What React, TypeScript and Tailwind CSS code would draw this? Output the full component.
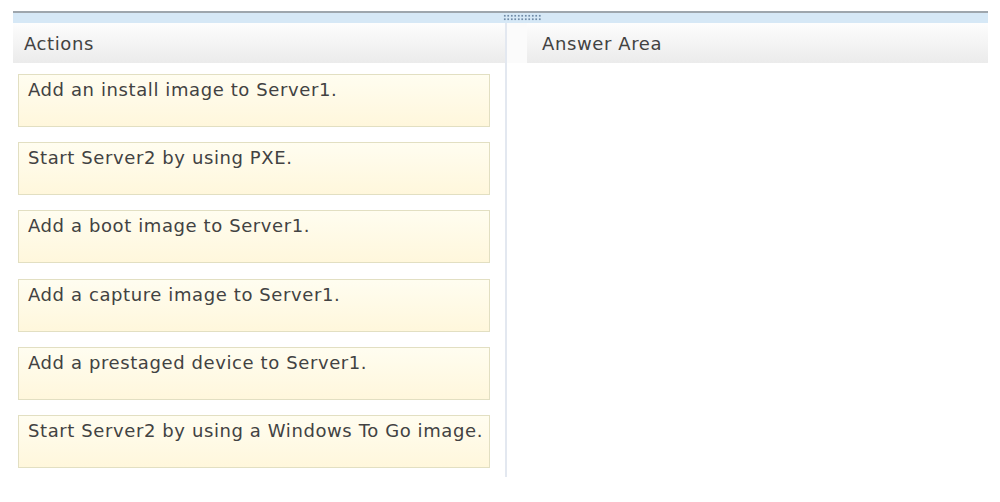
import React from "react";

const items = [
  "Add an install image to Server1.",
  "Start Server2 by using PXE.",
  "Add a boot image to Server1.",
  "Add a capture image to Server1.",
  "Add a prestaged device to Server1.",
  "Start Server2 by using a Windows To Go image.",
];

export default function App() {
  return (
    <div className="w-[1000px] h-[502px] bg-white overflow-hidden text-[#3a3a3a]" style={{ fontFamily: '"DejaVu Sans", Verdana, sans-serif' }}>
      <div className="ml-[13px] mt-[11px] w-[975px]">
        <div className="relative h-[12px] border-t-2 border-[#9ea6ad] bg-[#d6e8f6]">
          <div className="absolute left-[490px] top-[1px] w-[39px] h-[7px] bg-[radial-gradient(circle,#6f8aa6_0.8px,transparent_1.2px)] bg-[length:3.5px_3.5px]" />
        </div>
        <div className="flex">
          <div className="w-[492px] flex flex-col pb-[9px]">
            <div className="h-[40px] flex items-center pl-[11px] bg-gradient-to-b from-[#fdfdfd] to-[#ebebeb] text-[18px] tracking-[0.6px] text-[#424242]">
              Actions
            </div>
            <div className="flex flex-col gap-[15.2px] mt-[11px] pl-[5px] pr-[15px]">
              {items.map((t) => (
                <div
                  key={t}
                  className="h-[53px] border border-[#e2dfc2] bg-gradient-to-b from-[#fffdf0] to-[#fff7dc] pl-[9px] pt-[5px] text-[18px] leading-[20px] tracking-[0.6px] text-[#424242] whitespace-nowrap"
                >
                  {t}
                </div>
              ))}
            </div>
          </div>
          <div className="w-[2px] bg-[#e3e8f0]" />
          <div className="flex-1 flex flex-col">
            <div className="h-[40px] flex">
              <div className="w-[20px] bg-[#fbfbfb]" />
              <div className="flex-1 flex items-center pl-[15px] bg-gradient-to-b from-[#fdfdfd] to-[#ebebeb] text-[18px] tracking-[0.6px] text-[#424242]">
                Answer Area
              </div>
            </div>
          </div>
        </div>
      </div>
    </div>
  );
}
